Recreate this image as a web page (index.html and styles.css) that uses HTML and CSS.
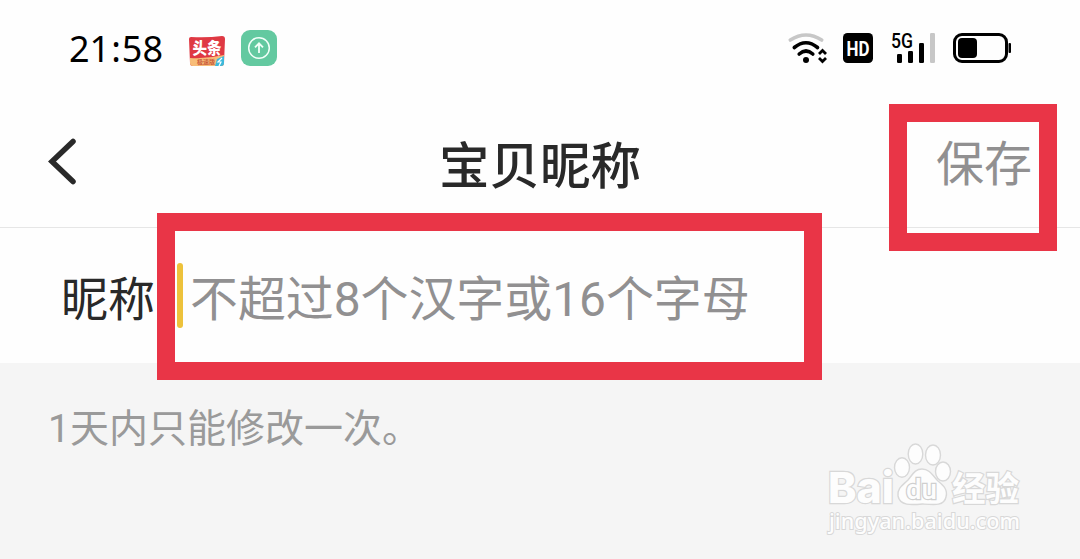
FILE: index.html
```html
<!DOCTYPE html>
<html lang="zh-CN">
<head>
    <meta charset="UTF-8">
    <meta name="viewport" content="width=device-width, initial-scale=1.0">
    <title>宝贝昵称</title>
    <link rel="stylesheet" href="styles.css">
</head>
<body>
    <div class="statusbar">
        <div class="status-left">
            <span class="time">21<span class="colon">:</span>58</span>
            <svg class="app-icon" width="38" height="36" viewBox="0 0 38 36">
                <path d="M3 5Q19 6 34 4Q37 4 37 7L36 31Q36 34 33 34H5Q2 34 2 31L1 7Q1 5 3 5Z" fill="#df3943"/>
                <path d="M2 26Q19 27 36 23V31Q36 34 33 34H5Q2 34 2 31Z" fill="#f8bd78"/>
                <path d="M29 27L36 24V31Q36 34 33 34H27Z" fill="#3cb9dc"/>
                <path d="M34 26L30 30H33L31 34" fill="none" stroke="#fff" stroke-width="1.2"/>
                <text x="4.5" y="22" textLength="29" lengthAdjust="spacingAndGlyphs" class="toutiao">头条</text>
                <text x="9" y="32" class="toutiao-sub">极速版</text>
            </svg>
            <svg class="upload-icon" width="36" height="36" viewBox="0 0 36 36">
                <rect width="36" height="36" rx="9" fill="#63c9a0"/>
                <g fill="none" stroke="#f2fff9" stroke-width="1.5">
                    <circle cx="18" cy="18" r="10.3"/>
                    <path d="M18 23V13.5M14 17.3L18 13.3L22 17.3" stroke-width="1.8"/>
                </g>
            </svg>
        </div>
        <div class="status-right">
            <svg class="wifi" width="40" height="32" viewBox="0 0 40 32">
                <g fill="none" stroke-linecap="round" stroke-width="3.6">
                    <path d="M2.3 8Q18-2 33.7 8" stroke="#c7c7c7"/>
                    <path d="M6.3 15.5Q18 6 29.5 15.5" stroke="#000"/>
                    <path d="M11.2 22Q18 16 24.8 22" stroke="#000"/>
                </g>
                <circle cx="18" cy="28" r="3" fill="#000"/>
                <path d="M31 22L34.5 18.5L38 22M31 26L34.5 29.5L38 26" fill="none" stroke="#000" stroke-width="2.8"/>
            </svg>
            <svg class="hd" width="30" height="30" viewBox="0 0 30 30">
                <rect width="30" height="30" rx="4.5" fill="#000"/>
                <text x="3.5" y="22.5" textLength="23" lengthAdjust="spacingAndGlyphs" class="hd-text">HD</text>
            </svg>
            <svg class="signal" width="45" height="32" viewBox="0 0 45 32">
                <text x="0" y="15.5" textLength="22" lengthAdjust="spacingAndGlyphs" class="net-text">5G</text>
                <rect x="6" y="22" width="5" height="9" rx="1.2"/>
                <rect x="17" y="19" width="5" height="12" rx="1.2"/>
                <rect x="28" y="11" width="5" height="20" rx="1.2"/>
                <rect x="39" y="1" width="5" height="30" rx="1.2" fill="#c7c7c7"/>
            </svg>
            <svg class="battery" width="60" height="30" viewBox="0 0 60 30">
                <rect x="1.5" y="1.5" width="52" height="27" rx="7.5" fill="none" stroke="#000" stroke-width="3"/>
                <rect x="5" y="5" width="19" height="20" rx="4"/>
                <rect x="55.5" y="10" width="2.5" height="10" rx="1"/>
            </svg>
        </div>
    </div>

    <div class="navbar">
        <svg class="back" width="30" height="48" viewBox="0 0 30 48">
            <path d="M25 3.5L4 23.5L25 43.5" fill="none" stroke="#292929" stroke-width="5.5" stroke-linecap="round"/>
        </svg>
        <h1 class="title">宝贝昵称</h1>
        <span class="save">保存</span>
        <div class="mark mark-save"></div>
    </div>

    <div class="field">
        <span class="label">昵称</span>
        <span class="cursor"></span>
        <span class="placeholder">不超过8个汉字或16个字母</span>
        <div class="mark mark-field"></div>
    </div>

    <p class="hint">1天内只能修改一次。</p>

    <svg class="watermark" width="220" height="115" viewBox="0 0 220 115">
        <g fill="#fdfdfd" stroke="#d8d8d8" stroke-width="1.4">
            <ellipse cx="87" cy="37.5" rx="7.5" ry="9.7"/>
            <ellipse cx="100.5" cy="24" rx="7.3" ry="10"/>
            <ellipse cx="118" cy="25" rx="7.5" ry="10"/>
            <ellipse cx="128" cy="41.5" rx="7.5" ry="9.5"/>
            <path d="M107 39C115 39 118 46 123 51C129 56 133 60 131 67C129 76 120 75 108 74C96 75 85 76 83 66C82 58 88 55 93 50C98 44 100 39 107 39Z"/>
        </g>
        <text x="13" y="73" textLength="66" lengthAdjust="spacingAndGlyphs" class="wm wm-bai">Bai</text>
        <text x="91" y="69" textLength="31" lengthAdjust="spacingAndGlyphs" class="wm wm-du">du</text>
        <text x="137" y="71" textLength="67" lengthAdjust="spacingAndGlyphs" class="wm wm-cn">经验</text>
        <text x="14" y="99" textLength="191" lengthAdjust="spacingAndGlyphs" class="wm wm-url">jingyan.baidu.com</text>
    </svg>
</body>
</html>
```
FILE: styles.css
```css
* {
    box-sizing: border-box;
}
body {
    margin: 0;
    height: 559px;
    overflow: hidden;
    position: relative;
    background: #f5f5f5;
    font-family: Roboto, "Noto Sans CJK SC", sans-serif;
    color: #292929;
}
svg {
    display: block;
    flex: none;
    overflow: visible;
}

/* status bar */
.statusbar {
    display: flex;
    justify-content: space-between;
    height: 97px;
    padding: 0 67px 0 69px;
    background: #fefefe;
}
.status-left, .status-right {
    display: flex;
    align-items: center;
    height: 96px;
}
.time {
    width: 94px;
    margin-top: 2px;
    font-family: "Noto Sans", sans-serif;
    font-size: 36px;
    line-height: 50px;
    color: #000;
    white-space: nowrap;
}
.colon {
    margin: 0 1px;
}
.app-icon {
    margin: 4px 0 0 25px;
}
.upload-icon {
    margin-left: 15px;
}
.toutiao {
    font: 900 16px "Noto Sans CJK SC", sans-serif;
    fill: #fff;
}
.toutiao-sub {
    font: bold 6px "Noto Sans CJK SC", sans-serif;
    fill: #c95b3b;
}
.hd {
    margin-left: 15px;
}
.hd-text {
    font: bold 21px Roboto, sans-serif;
    fill: #fff;
}
.signal {
    margin-left: 18px;
}
.net-text {
    font: 500 20px Roboto, sans-serif;
}
.battery {
    margin-left: 17px;
}

/* title bar */
.navbar {
    position: relative;
    display: flex;
    align-items: center;
    justify-content: space-between;
    height: 131px;
    padding: 0 48px;
    border-bottom: 1px solid #e6e6e6;
    background: #fefefe;
}
.title {
    margin: 9px 0 0 66px;
    font-size: 50.5px;
    font-weight: 500;
    line-height: 70px;
}
.save {
    margin-top: 5px;
    font-size: 48px;
    line-height: 70px;
    color: #919091;
}

/* nickname row */
.field {
    position: relative;
    display: flex;
    align-items: center;
    height: 135px;
    padding-left: 61px;
    background: #fefefe;
}
.label {
    margin-top: 8px;
    font-size: 47px;
    line-height: 70px;
}
.cursor {
    width: 6px;
    height: 65px;
    margin-left: 22px;
    border-radius: 3px;
    background: #edc23b;
}
.placeholder {
    margin: 8px 0 0 7px;
    font-size: 47.9px;
    line-height: 70px;
    color: #919091;
    white-space: nowrap;
}

.hint {
    margin: 0;
    padding: 36px 48px;
    font-size: 39px;
    line-height: 60px;
    color: #9a9a9a;
}

/* red highlight boxes */
.mark {
    position: absolute;
    z-index: 1;
    border: 18px solid #e93547;
}
.mark-save {
    left: 889px;
    top: 7px;
    width: 168px;
    height: 147px;
}
.mark-field {
    left: 157px;
    top: -15px;
    width: 665px;
    height: 167px;
}

.watermark {
    position: absolute;
    left: 815px;
    top: 430px;
}
.wm {
    fill: #fdfdfd;
    stroke: #d8d8d8;
    stroke-width: 2.4px;
    paint-order: stroke;
}
.wm-bai {
    font: 800 43px Inter, "Noto Sans", sans-serif;
}
.wm-du {
    font: 500 27px Roboto, sans-serif;
    stroke: #cfcfcf;
}
.wm-cn {
    font: bold 34px "Noto Sans CJK SC", sans-serif;
}
.wm-url {
    font: 500 22px "Noto Sans", sans-serif;
    stroke-width: 2px;
}
```
